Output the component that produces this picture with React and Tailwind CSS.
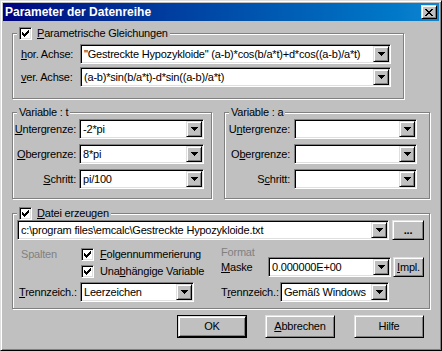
import React from "react";

const raised =
  "border border-t-[#dfdfdf] border-l-[#dfdfdf] border-b-black border-r-black shadow-[inset_1px_1px_0_#fff,inset_-1px_-1px_0_#808080]";
const sunken =
  "border border-t-[#808080] border-l-[#808080] border-b-white border-r-white shadow-[inset_1px_1px_0_#000,inset_-1px_-1px_0_#dfdfdf]";

function Arrow() {
  return (
    <svg width="7" height="4" shapeRendering="crispEdges">
      <rect x="0" y="0" width="7" height="1" />
      <rect x="1" y="1" width="5" height="1" />
      <rect x="2" y="2" width="3" height="1" />
      <rect x="3" y="3" width="1" height="1" />
    </svg>
  );
}

function CloseGlyph() {
  const rows = [[0, 1, 6, 7], [1, 2, 5, 6], [2, 3, 4, 5], [3, 4], [2, 3, 4, 5], [1, 2, 5, 6], [0, 1, 6, 7]];
  return (
    <svg width="8" height="7" shapeRendering="crispEdges">
      {rows.map((xs, y) => xs.map((x) => <rect key={`${x}-${y}`} x={x} y={y} width="1" height="1" />))}
    </svg>
  );
}

function Check() {
  return (
    <div className={`${sunken} w-[13px] h-[13px] bg-white shrink-0 flex items-center justify-center`}>
      <svg width="7" height="7" shapeRendering="crispEdges">
        {[2, 3, 4, 3, 2, 1, 0].map((y, x) => (
          <rect key={x} x={x} y={y} width="1" height="3" />
        ))}
      </svg>
    </div>
  );
}

function Combo({ value, className = "" }) {
  return (
    <div className={`${sunken} flex h-[20px] bg-white p-[1px] ${className}`}>
      <div className="flex-1 min-w-0 flex items-center pl-[2px] whitespace-nowrap overflow-hidden">{value}</div>
      <div className={`${raised} bg-[#c0c0c0] w-[16px] h-full flex items-center justify-center`}>
        <Arrow />
      </div>
    </div>
  );
}

function Button({ children, className = "" }) {
  return (
    <div className={`${raised} bg-[#c0c0c0] flex items-center justify-center ${className}`}>{children}</div>
  );
}

function Group({ legend, className = "", children }) {
  return (
    <div className={`relative border border-[#808080] shadow-[inset_1px_1px_0_#fff,1px_1px_0_#fff] ${className}`}>
      <div className="absolute left-[4px] top-[-7px] h-[13px] bg-[#c0c0c0] px-[2px] flex items-center gap-[5px]">
        {legend}
      </div>
      {children}
    </div>
  );
}

const U = ({ children }) => <u className="underline-offset-[1px]">{children}</u>;

export default function App() {
  return (
    <div className="font-['Liberation_Sans',Arial,sans-serif] w-[442px] h-[351px] bg-[#c0c0c0] text-black text-[11px] tracking-[-0.2px] leading-[13px] border border-t-[#dfdfdf] border-l-[#dfdfdf] border-b-black border-r-black shadow-[inset_1px_1px_0_#fff,inset_-1px_-1px_0_#808080] p-[2px] flex flex-col">
      <div className="h-[18px] shrink-0 flex items-center justify-between bg-linear-to-r from-[#000080] to-[#1084d0] px-[2px]">
        <span className="text-white font-bold text-[12px] tracking-normal">Parameter der Datenreihe</span>
        <Button className="w-[16px] h-[14px]">
          <CloseGlyph />
        </Button>
      </div>

      <Group
        className="ml-[9px] mt-[12px] w-[392px] h-[66px] shrink-0 pt-[10px] pl-[8px]"
        legend={
          <>
            <Check />
            <span>
              <U>P</U>arametrische Gleichungen
            </span>
          </>
        }
      >
        <div className="flex items-center">
          <span className="w-[59px]">
            <U>h</U>or. Achse:
          </span>
          <Combo className="w-[311px]" value={'"Gestreckte Hypozykloide" (a-b)*cos(b/a*t)+d*cos((a-b)/a*t)'} />
        </div>
        <div className="flex items-center mt-[3px]">
          <span className="w-[59px]">
            <U>v</U>er. Achse:
          </span>
          <Combo className="w-[311px]" value="(a-b)*sin(b/a*t)-d*sin((a-b)/a*t)" />
        </div>
      </Group>

      <div className="flex mt-[13px] ml-[9px] shrink-0">
        <Group className="w-[200px] h-[87px] pt-[6px]" legend={<span>Variable : t</span>}>
          {[
            [<><U>U</U>ntergrenze:</>, "-2*pi"],
            [<><U>O</U>bergrenze:</>, "8*pi"],
            [<><U>S</U>chritt:</>, "pi/100"],
          ].map(([label, v], i) => (
            <div key={i} className={`flex items-center ${i ? "mt-[5px]" : ""}`}>
              <span className="w-[66px] text-right pr-[3px]">{label}</span>
              <Combo className="w-[125px]" value={v} />
            </div>
          ))}
        </Group>
        <Group className="ml-[12px] w-[206px] h-[87px] pt-[6px]" legend={<span>Variable : a</span>}>
          {[
            <>U<U>n</U>tergrenze:</>,
            <>O<U>b</U>ergrenze:</>,
            <>S<U>c</U>hritt:</>,
          ].map((label, i) => (
            <div key={i} className={`flex items-center ${i ? "mt-[5px]" : ""}`}>
              <span className="w-[69px] text-right pr-[4px]">{label}</span>
              <Combo className="w-[123px]" value="" />
            </div>
          ))}
        </Group>
      </div>

      <Group
        className="ml-[9px] mt-[14px] w-[418px] h-[96px] shrink-0 pt-[6px] pl-[4px]"
        legend={
          <>
            <Check />
            <span>
              <U>D</U>atei erzeugen
            </span>
          </>
        }
      >
        <div className="flex">
          <Combo className="w-[372px]" value="c:\program files\emcalc\Gestreckte Hypozykloide.txt" />
          <Button className="ml-[3px] w-[32px] h-[20px] font-bold">...</Button>
        </div>
        <div className="flex mt-[8px]">
          <div className="w-[204px]">
            <div className="flex">
              <span className="w-[64px] pl-[4px] text-[#808080] h-[13px] flex items-center">Spalten</span>
              <div className="flex flex-col gap-[4px]">
                <div className="flex items-center gap-[6px] h-[13px]">
                  <Check />
                  <span>
                    <U>F</U>olgennummerierung
                  </span>
                </div>
                <div className="flex items-center gap-[6px] h-[13px]">
                  <Check />
                  <span>
                    Una<U>b</U>hängige Variable
                  </span>
                </div>
              </div>
            </div>
            <div className="flex items-center mt-[4px]">
              <span className="w-[63px] pl-[2px]">
                <U>T</U>rennzeich.:
              </span>
              <Combo className="w-[114px]" value="Leerzeichen" />
            </div>
          </div>
          <div>
            <div className="h-[9px] leading-[9px] text-[#808080]">Format</div>
            <div className="flex items-center">
              <span className="w-[47px]">
                <U>M</U>aske
              </span>
              <Combo className="w-[123px]" value="0.000000E+00" />
              <Button className="ml-[2px] w-[31px] h-[20px]">
                <span>
                  <U>I</U>mpl.
                </span>
              </Button>
            </div>
            <div className="flex items-center mt-[5px]">
              <span className="w-[59px]">
                T<U>r</U>ennzeich.:
              </span>
              <Combo className="w-[109px]" value="Gemäß Windows" />
            </div>
          </div>
        </div>
      </Group>

      <div className="flex mt-[6px] ml-[174px] shrink-0">
        <div className="w-[70px] h-[23px] border border-black">
          <Button className="w-full h-full">OK</Button>
        </div>
        <Button className="ml-[18px] w-[70px] h-[23px]">
          <span>
            <U>A</U>bbrechen
          </span>
        </Button>
        <Button className="ml-[19px] w-[70px] h-[23px]">Hilfe</Button>
      </div>
    </div>
  );
}
